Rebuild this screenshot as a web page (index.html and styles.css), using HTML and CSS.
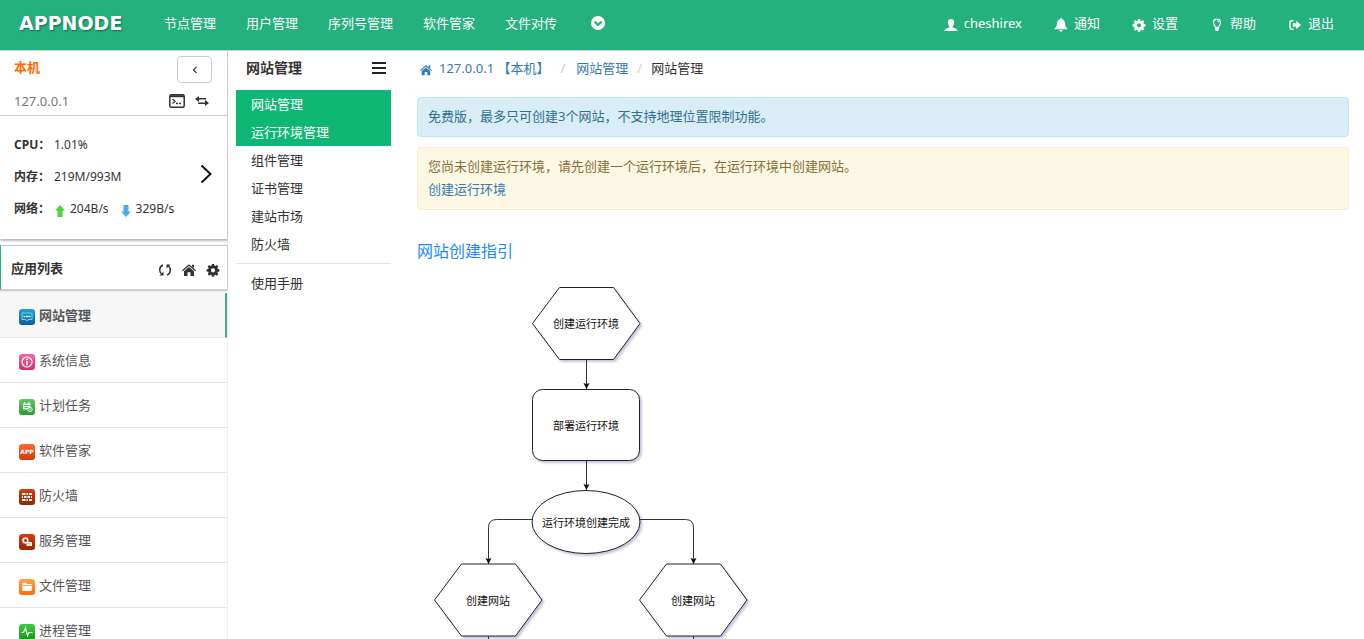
FILE: index.html
```html
<!DOCTYPE html>
<html lang="zh-CN">
<head>
<meta charset="utf-8">
<meta name="viewport" content="width=device-width, initial-scale=1">
<title>网站管理 - AppNode</title>
<link rel="stylesheet" href="styles.css">
</head>
<body>
<header class="topbar">
  <a class="logo" href="#">APPNODE</a>
  <nav class="topnav">
    <a href="#">节点管理</a>
    <a href="#">用户管理</a>
    <a href="#">序列号管理</a>
    <a href="#">软件管家</a>
    <a href="#">文件对传</a>
    <button class="plain more" type="button" aria-label="更多">
      <svg width="14" height="14" viewBox="0 0 14 14"><circle cx="7" cy="7" r="7" fill="#fff"/><path d="M3.500 5.500 7 9l3.500-3.500" fill="none" stroke="#24b17d" stroke-width="2.200"/></svg>
    </button>
  </nav>
  <nav class="usernav">
    <a href="#"><svg class="ico" viewBox="0 0 14 14"><path d="M7 1c2.200 0 3.300 1.400 3.200 3.500C10.100 6.500 9.500 7.500 8.700 8.200v1.300c1.500.8 4.800 1 4.800 3.500H.5c0-2.500 3.300-2.700 4.800-3.500V8.200C4.500 7.500 3.900 6.500 3.800 4.500 3.700 2.400 4.800 1 7 1z"/></svg>cheshirex</a>
    <a href="#"><svg class="ico" viewBox="0 0 14 14"><path d="M7 0c.7 0 1 .5 1 1 2.200.6 2.800 2.400 3 4.500.2 2.500.8 3.700 2.400 5v.8H.6v-.8C2.200 9.200 2.800 8 3 5.500 3.200 3.400 3.800 1.600 6 1c0-.5.300-1 1-1zM5.300 12h3.400c-.2 1-.8 1.500-1.700 1.500S5.500 13 5.300 12z"/></svg>通知</a>
    <a href="#"><svg class="ico" viewBox="0 0 14 14"><use href="#gear"/></svg>设置</a>
    <a href="#"><svg class="ico" viewBox="0 0 14 14"><path d="M5.300 9.300C5 7.500 3.500 6.500 3.500 4.600a3.500 3.500 0 0 1 7 0c0 1.900-1.500 2.900-1.800 4.700z" fill="none" stroke="#fff" stroke-width="1.200"/><path d="M5 9.500h4v2L8 13H6l-1-1.500zM7 2.300v1c.8 0 1.300.5 1.300 1.200h.9C9.200 3.200 8.300 2.300 7 2.300z"/></svg>帮助</a>
    <a href="#"><svg class="ico" viewBox="0 0 14 14"><path d="M5.500 2.700H3.700c-1.200 0-1.700.6-1.700 1.700v5.200c0 1.100.5 1.700 1.700 1.700h1.800" fill="none" stroke="#fff" stroke-width="1.400"/><path d="M8.300 2.800 13 7l-4.700 4.200V8.700H4.800V5.300h3.500z"/></svg>退出</a>
  </nav>
</header>

<svg class="defs" width="0" height="0" aria-hidden="true">
  <defs>
    <g id="gear"><path fill-rule="evenodd" d="M5.900 1h2.200l.3 1.600 1 .4 1.400-.9 1.500 1.500-.9 1.400.4 1 1.600.3v2.200l-1.600.3-.4 1 .9 1.400-1.500 1.500-1.400-.9-1 .4-.3 1.600H5.900l-.3-1.600-1-.4-1.400.9-1.500-1.500.9-1.400-.4-1L.6 8.500V6.300L2.200 6l.4-1-.9-1.400 1.500-1.500 1.400.9 1-.4zM7 5.200a2.100 2.100 0 1 0 0 4.200 2.100 2.100 0 0 0 0-4.200z"/></g>
    <g id="house"><path d="M7 1.300 14 7.300l-.8.9L7 3 .8 8.200 0 7.300zM10 1.800h2v3.300l-2-1.700zM7 4l5 4.200V13H8.500V9.300h-3V13H2V8.200z"/></g>
    <linearGradient id="blue" x2="0" y2="1"><stop stop-color="#1fa0d6"/><stop offset="1" stop-color="#0a5f95"/></linearGradient>
    <linearGradient id="pink" x2="0" y2="1"><stop stop-color="#f8679d"/><stop offset="1" stop-color="#cf3168"/></linearGradient>
    <linearGradient id="green" x2="0" y2="1"><stop stop-color="#65c766"/><stop offset="1" stop-color="#2e9931"/></linearGradient>
    <linearGradient id="orange" x2="0" y2="1"><stop stop-color="#ff6a35"/><stop offset="1" stop-color="#d43a05"/></linearGradient>
    <linearGradient id="red" x2="0" y2="1"><stop stop-color="#d63d10"/><stop offset="1" stop-color="#942603"/></linearGradient>
    <linearGradient id="amber" x2="0" y2="1"><stop stop-color="#ffa344"/><stop offset="1" stop-color="#ff6d08"/></linearGradient>
    <linearGradient id="lime" x2="0" y2="1"><stop stop-color="#42cc46"/><stop offset="1" stop-color="#16951b"/></linearGradient>
  </defs>
</svg>

<div class="layout">
  <aside class="sidebar">
    <section class="host">
      <div class="row">
        <strong class="hostname">本机</strong>
        <button class="collapse" type="button" aria-label="收起"><svg width="6" height="8" viewBox="0 0 6 8"><path d="M4.500.8 1.500 4l3 3.200" fill="none" stroke="#333" stroke-width="1.200"/></svg></button>
      </div>
      <div class="row ip">
        <span>127.0.0.1</span>
        <span class="tools">
          <button class="plain" type="button" aria-label="终端"><svg width="16" height="14" viewBox="0 0 16 14"><rect x=".8" y=".8" width="14.400" height="12.400" rx="1.500" fill="#fff" stroke="#333" stroke-width="1.500"/><path d="M1 2.200h14" stroke="#333" stroke-width="2"/><path d="m3.500 5 2.500 2.300-2.500 2.300M7 9.500h2M10 9.500h2" fill="none" stroke="#333" stroke-width="1.300"/></svg></button>
          <button class="plain" type="button" aria-label="切换"><svg width="14" height="10" viewBox="0 0 14 10"><path d="M0 3 4 0v2h7v1.500H4V6zM14 7l-4 3V8H3V6.500h7V4z" fill="#333"/></svg></button>
        </span>
      </div>
    </section>
    <section class="stats">
      <dl>
        <div><dt>CPU：</dt><dd>1.01%</dd></div>
        <div><dt>内存：</dt><dd>219M/993M</dd></div>
        <div><dt>网络：</dt><dd class="net">
          <span><svg width="12" height="12" viewBox="0 0 12 12"><path d="m6 0 5 5.500H8.500V12h-5V5.500H1z" fill="#4bd63e"/></svg>204B/s</span>
          <span><svg width="12" height="12" viewBox="0 0 12 12"><path d="m6 12 5-5.500H8.500V0h-5v6.500H1z" fill="#45aeea"/></svg>329B/s</span></dd></div>
      </dl>
      <button class="plain" type="button" aria-label="详情"><svg width="12" height="20" viewBox="0 0 12 20"><path d="m1.500 1.500 9 8.500-9 8.500" fill="none" stroke="#111" stroke-width="2"/></svg></button>
    </section>
    <section class="apphead">
      <h2>应用列表</h2>
      <span class="tools">
        <button class="plain" type="button" aria-label="刷新"><svg width="14" height="14" viewBox="0 0 14 14"><path d="M5 2C.8 3.500.8 9 3.800 11.500M9 12c4.200-1.500 4.200-7 1.200-9.500" fill="none" stroke="#333" stroke-width="1.500"/><path d="M1.500 12.500h4v-4zM12.500 1.500h-4v4z" fill="#333"/></svg></button>
        <button class="plain" type="button" aria-label="主页"><svg width="14" height="14" viewBox="0 0 14 14" fill="#333"><use href="#house"/></svg></button>
        <button class="plain" type="button" aria-label="设置"><svg width="14" height="14" viewBox="0 0 14 14" fill="#333"><use href="#gear"/></svg></button>
      </span>
    </section>
    <nav class="apps">
      <a class="active" href="#"><svg class="app" viewBox="0 0 16 16"><rect width="16" height="16" rx="3" fill="url(#blue)"/><path d="M3 4h10v6.500H9L8 12l-1-1.500H3z" fill="none" stroke="#7fd0f2" stroke-width="1"/><path d="M4.500 7.500h2M7 7.500h2M9.500 7.500h2" stroke="#fff" stroke-width="1.500"/></svg>网站管理</a>
      <a href="#"><svg class="app" viewBox="0 0 16 16"><rect width="16" height="16" rx="3" fill="url(#pink)"/><circle cx="8" cy="8" r="5" fill="none" stroke="#fff" stroke-width="1.200"/><path d="M8 4.500V6M8 7v4.300" stroke="#fff" stroke-width="1.600"/></svg>系统信息</a>
      <a href="#"><svg class="app" viewBox="0 0 16 16"><rect width="16" height="16" rx="3" fill="url(#green)"/><path d="M4 4.500h7.500v6H4z" fill="#e9f8e8"/><path d="M5.500 3v2M10 3v2" stroke="#fff"/><path d="M4.500 6.500H11M5.500 8.500H9" stroke="#45ad46" stroke-width=".8"/><circle cx="11" cy="10.500" r="2.200" fill="#45ad46" stroke="#e9f8e8"/><path d="M11 9v1.700h1" fill="none" stroke="#fff" stroke-width=".7"/></svg>计划任务</a>
      <a href="#"><svg class="app" viewBox="0 0 16 16"><rect width="16" height="16" rx="3" fill="url(#orange)"/><text class="badge" x="8" y="10" text-anchor="middle">APP</text></svg>软件管家</a>
      <a href="#"><svg class="app" viewBox="0 0 16 16"><rect width="16" height="16" rx="3" fill="url(#red)"/><path d="M3 5h3.500M7.500 5H9M10 5h3M3 8h1M5 8h2.500M8.500 8H11M12 8h1M3 11h3.500M7.500 11H9M10 11h3" stroke="#fff" stroke-width="2"/></svg>防火墙</a>
      <a href="#"><svg class="app" viewBox="0 0 16 16"><rect width="16" height="16" rx="3" fill="url(#red)"/><circle cx="6.500" cy="6.500" r="2.300" fill="none" stroke="#fff" stroke-width="1.600"/><path d="M6.500 3v1M3 6.500h1M4 4l.8.800M4 9l.8-.8M9 4l-.8.800" stroke="#fff" stroke-width="1.200"/><path d="M7.500 8h5.500v4H7.500z" fill="#fff"/><path d="M8.500 9.500H12M8.500 11H12" stroke="#d89a88" stroke-width=".7"/></svg>服务管理</a>
      <a href="#"><svg class="app" viewBox="0 0 16 16"><rect width="16" height="16" rx="3" fill="url(#amber)"/><path d="M3 7h10l-.5 5h-9zM3.500 3.800h3.700l1 1.200h4.500v1.300H3.500z" fill="#fff"/></svg>文件管理</a>
      <a href="#"><svg class="app" viewBox="0 0 16 16"><rect width="16" height="16" rx="3" fill="url(#lime)"/><path d="M2.500 8.500h2L6.500 4l2 7.500 1.500-3h3.500" fill="none" stroke="#fff" stroke-width="1.200"/></svg>进程管理</a>
    </nav>
  </aside>

  <aside class="submenu">
    <div class="subhead">
      <h2>网站管理</h2>
      <button class="plain" type="button" aria-label="菜单"><svg width="14" height="12" viewBox="0 0 14 12"><path d="M0 1h14M0 6h14M0 11h14" stroke="#222" stroke-width="2"/></svg></button>
    </div>
    <nav>
      <a class="on" href="#">网站管理</a>
      <a class="on" href="#">运行环境管理</a>
      <a href="#">组件管理</a>
      <a href="#">证书管理</a>
      <a href="#">建站市场</a>
      <a href="#">防火墙</a>
      <hr>
      <a href="#">使用手册</a>
    </nav>
  </aside>

  <main class="content">
    <nav class="crumbs" aria-label="位置">
      <a href="#"><svg width="12" height="12" viewBox="0 0 14 14" fill="#337ab7"><use href="#house"/></svg>127.0.0.1 【本机】</a>
      <span class="sep wide">/</span>
      <a href="#">网站管理</a>
      <span class="sep">/</span>
      <span>网站管理</span>
    </nav>
    <div class="alert info">免费版，最多只可创建3个网站，不支持地理位置限制功能。</div>
    <div class="alert warn">您尚未创建运行环境，请先创建一个运行环境后，在运行环境中创建网站。<br><a href="#">创建运行环境</a></div>
    <h1>网站创建指引</h1>
    <svg class="flow" width="340" height="400" viewBox="0 0 340 400">
      <defs>
        <marker id="tip" markerWidth="6" markerHeight="7" refX="6" refY="3" orient="auto" markerUnits="userSpaceOnUse"><path d="M0 0 6 3 0 6 1 3z" fill="#111"/></marker>
      </defs>
      <g class="shapes">
        <path d="M142.500 7.500h54l26.500 36-26.500 36h-54l-27-36z"/>
        <rect x="115.500" y="109.500" width="107" height="71" rx="10"/>
        <ellipse cx="169" cy="242" rx="54" ry="31.500"/>
        <path d="M44.500 284h54l26.500 36-26.500 36h-54l-27-36z"/>
        <path d="M249.500 284h54l26.500 36-26.500 36h-54l-27-36z"/>
      </g>
      <g class="lines" marker-end="url(#tip)">
        <path d="M169.500 79.500V109"/>
        <path d="M169.500 181V210"/>
        <path d="M115 239.500H79.500q-8 0-8 8V284"/>
        <path d="M223 239.500h45.500q8 0 8 8V284"/>
        <path d="M71.500 356V386"/>
        <path d="M276.500 356V386"/>
      </g>
      <g class="labels">
        <text x="169" y="48">创建运行环境</text>
        <text x="169" y="150">部署运行环境</text>
        <text x="169" y="247">运行环境创建完成</text>
        <text x="71" y="325">创建网站</text>
        <text x="276" y="325">创建网站</text>
      </g>
    </svg>
  </main>
</div>
</body>
</html>
```

FILE: styles.css
```css
* { box-sizing: border-box; }

body {
  margin: 0;
  height: 100vh;
  overflow: hidden;
  display: flex;
  flex-direction: column;
  background: #fff;
  color: #333;
  font: 13px/20px "Noto Sans", "Noto Sans CJK SC", sans-serif;
}

a { color: #337ab7; text-decoration: none; }
h1, h2, dl, dd { margin: 0; }
svg { display: block; flex: none; }
.defs { position: absolute; }

.plain {
  padding: 0;
  border: 0;
  background: none;
  cursor: pointer;
}

/* Top bar */
.topbar {
  flex: none;
  display: flex;
  align-items: center;
  height: 51px;
  padding: 0 30px 4px 19px;
  background: #24b17d;
  border-bottom: 1px solid #ccc;
}
.topbar a { color: #fff; }
.logo {
  width: 145px;
  font: bold 19px/20px "DejaVu Sans", sans-serif;
  text-shadow: 1px 1px 2px #12694a;
}
.topnav, .usernav { display: flex; align-items: center; }
.topnav { gap: 30px; }
.more { margin-left: 4px; }
.usernav { gap: 32px; margin-left: auto; }
.usernav a { display: flex; align-items: center; gap: 6px; }
.ico { width: 14px; height: 14px; margin-top: 4px; fill: #fff; }

.layout {
  flex: 1;
  min-height: 0;
  display: grid;
  grid-template-columns: 228px 163px 1fr;
}
.layout > * { min-height: 0; overflow: hidden; }

/* Left sidebar */
.row { display: flex; align-items: center; justify-content: space-between; }
.host {
  padding: 5px 15px 3px 14px;
  border-right: 1px solid #ccc;
  border-bottom: 1px solid #ccc;
}
.hostname { color: #ff6a00; margin-bottom: 6px; }
.collapse {
  display: grid;
  place-items: center;
  width: 35px;
  height: 27px;
  border: 1px solid #ccc;
  border-radius: 4px;
  background: #fff;
}
.ip { height: 29px; padding: 6px 3px 0 0; color: #777; }
.tools { display: flex; align-items: center; gap: 10px; }

.stats {
  display: flex;
  align-items: center;
  justify-content: space-between;
  padding: 13px 15px 14px 14px;
  border-right: 1px solid #ccc;
  box-shadow: 0 2px 2px #bbb;
  font-size: 12px;
  line-height: 32px;
}
.stats dl > div { display: flex; }
.stats dt { width: 40px; font-weight: bold; white-space: nowrap; }
.stats .plain { margin-bottom: 6px; }
.net, .net span { display: flex; align-items: center; }
.net { gap: 11px; }
.net span { gap: 4px; }
.net svg { margin-top: 4px; }

.apphead {
  display: flex;
  align-items: center;
  justify-content: space-between;
  height: 45px;
  margin-top: 6px;
  padding: 0 7px 0 10px;
  border: 1px solid #ccc;
  border-left-color: #24b17d;
  box-shadow: 0 1px 2px #bbb;
}
.apphead h2 { font-size: 13px; }
.apphead .tools { padding-top: 4px; }

.apps { margin-top: 3px; border-right: 1px solid #eee; }
.apps a {
  display: flex;
  align-items: center;
  gap: 4px;
  height: 45px;
  padding: 0 19px;
  border-bottom: 1px solid #e5e5e5;
  color: #555;
}
.apps .active { background: #f7f7f7; border-right: 2px solid #3fb083; font-weight: bold; }
.app { width: 16px; height: 16px; margin-top: 4px; }
.badge { font: bold 6px "DejaVu Sans", sans-serif; fill: #fff; }

/* Section menu */
.submenu { padding-left: 8px; }
.subhead {
  display: flex;
  align-items: center;
  justify-content: space-between;
  height: 39px;
  padding: 0 5px 6px 10px;
}
.subhead h2 { font-size: 14px; }
.submenu nav a {
  display: block;
  padding: 4px 15px;
  color: #333;
}
.submenu nav .on { background: #0fb774; color: #fff; }
.submenu hr { margin: 5px 0; border: 0; border-top: 1px solid #e5e5e5; }

/* Content */
.content { padding: 7px 15px 0 26px; }
.crumbs { display: flex; align-items: center; padding-left: 3px; }
.crumbs a { display: flex; align-items: center; gap: 7px; }
.crumbs svg { margin-top: 4px; }
.sep { padding: 0 9px; color: #ccc; }
.wide { padding: 0 11px; }
.alert {
  margin-bottom: 10px;
  padding: 7px 10px 8px;
  border: 1px solid;
  border-radius: 4px;
  line-height: 23px;
}
.info { margin-top: 19px; background: #d9edf7; border-color: #bce8f1; color: #31708f; }
.warn { background: #fcf8e3; border-color: #faebcc; color: #8a6d3b; }
h1 {
  margin-top: 29px;
  color: #1e88ff;
  font-size: 16px;
  font-weight: normal;
  line-height: 24px;
}
.flow { margin-top: 17px; }
.lines path { fill: none; stroke: #333; }
.shapes {
  fill: #fff;
  stroke: #222;
  filter: drop-shadow(2px 2px 1px #c4c4dc);
}
.labels {
  font-size: 11px;
  fill: #111;
  text-anchor: middle;
}
```
